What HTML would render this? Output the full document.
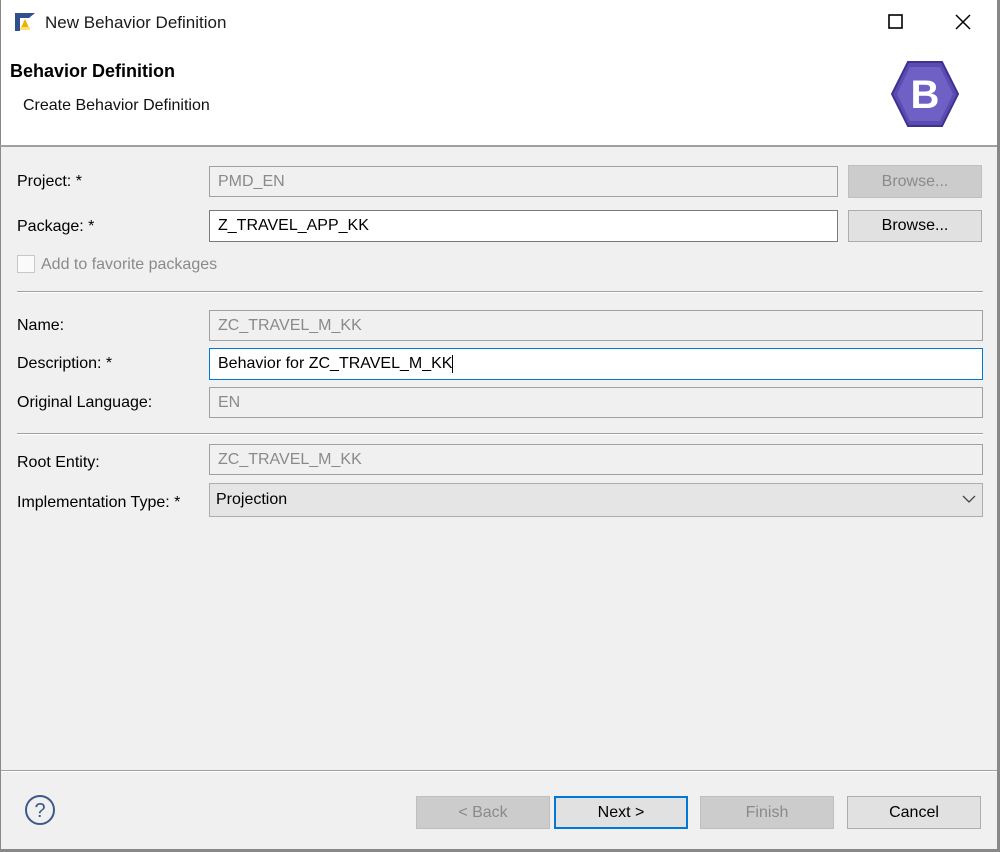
<!DOCTYPE html>
<html><head><meta charset="utf-8"><style>
*{box-sizing:border-box;margin:0;padding:0}
body{width:1000px;height:852px;overflow:hidden;background:#f0f0f0;font-family:"Liberation Sans",sans-serif;font-size:16px;color:#000;position:relative}
.a{position:absolute;white-space:nowrap}
.inp{position:absolute;border:1px solid #7a7a7a;background:#fff;padding-left:8px;display:flex;align-items:center}
.dis{background:#f0f0f0;border-color:#a0a0a0;color:#8a8a8a}
.btn{position:absolute;border:1px solid #adadad;background:#e1e1e1;display:flex;align-items:center;justify-content:center;height:33px;width:134px}
.bd{background:#cccccc;border-color:#bfbfbf;color:#8a8a8a}
.sep{position:absolute;height:2px;background:#a0a0a0;border-bottom:1px solid #fff}
.lbl{position:absolute;white-space:nowrap;transform:translateY(-50%)}
</style></head><body>
<div class="a" style="left:0;top:0;width:1000px;height:145px;background:#fff"></div>
<div class="a" style="left:0;top:0;width:1px;height:852px;background:#888"></div>
<div class="a" style="left:997px;top:0;width:3px;height:852px;background:#888"></div>
<svg class="a" style="left:14px;top:12px" width="22" height="20" viewBox="0 0 22 20"><path d="M1 1H21L15 6H6V19H1Z" fill="#2f4f8f"/><path d="M11 7L16 18H6Z" fill="#f0b000"/><rect x="6" y="15" width="10" height="3" fill="#ffe080"/></svg>
<div class="a" style="left:45px;top:13px;font-size:17px;color:#1a1a1a">New Behavior Definition</div>
<svg class="a" style="left:888px;top:14px" width="16" height="16"><rect x="1" y="1" width="13" height="13" fill="none" stroke="#000" stroke-width="1.6"/></svg>
<svg class="a" style="left:955px;top:14px" width="16" height="16"><path d="M1 1L15 15M15 1L1 15" stroke="#000" stroke-width="1.5"/></svg>
<div class="a" style="left:10px;top:61px;font-size:18px;font-weight:bold">Behavior Definition</div>
<div class="a" style="left:23px;top:97px;font-size:16px;color:#111">Create Behavior Definition</div>
<svg class="a" style="left:890px;top:58px" width="70" height="72" viewBox="0 0 70 72"><polygon points="18,4 52,4 68,36 52,68 18,68 2,36" fill="#5a4bb0" stroke="#3e328f" stroke-width="2"/><polygon points="20,9 50,9 63,36 50,63 20,63 7,36" fill="#6e60c4"/><text x="35" y="50" text-anchor="middle" font-family="Liberation Sans" font-weight="bold" font-size="40" fill="#fff">B</text></svg>
<div class="a" style="left:0;top:145px;width:997px;height:2px;background:#a0a0a0"></div>

<div class="lbl" style="left:17px;top:182px">Project: *</div>
<div class="inp dis" style="left:209px;top:166px;width:629px;height:31px">PMD_EN</div>
<div class="btn bd" style="left:848px;top:165px">Browse...</div>
<div class="lbl" style="left:17px;top:227px">Package: *</div>
<div class="inp" style="left:209px;top:210px;width:629px;height:32px">Z_TRAVEL_APP_KK</div>
<div class="btn" style="left:848px;top:210px;height:32px">Browse...</div>
<div class="a" style="left:17px;top:255px;width:18px;height:18px;border:1px solid #c8c8c8;background:#fafafa"></div>
<div class="lbl" style="left:41px;top:265px;color:#8a8a8a">Add to favorite packages</div>
<div class="sep" style="left:17px;top:291px;width:966px"></div>

<div class="lbl" style="left:17px;top:326px">Name:</div>
<div class="inp dis" style="left:209px;top:310px;width:774px;height:31px">ZC_TRAVEL_M_KK</div>
<div class="lbl" style="left:17px;top:364px">Description: *</div>
<div class="inp" style="left:209px;top:348px;width:774px;height:32px;border-color:#0078d7">Behavior for ZC_TRAVEL_M_KK<span style="display:inline-block;width:1px;height:18px;background:#000"></span></div>
<div class="lbl" style="left:17px;top:403px">Original Language:</div>
<div class="inp dis" style="left:209px;top:387px;width:774px;height:31px">EN</div>
<div class="sep" style="left:17px;top:433px;width:966px"></div>

<div class="lbl" style="left:17px;top:463px">Root Entity:</div>
<div class="inp dis" style="left:209px;top:444px;width:774px;height:31px">ZC_TRAVEL_M_KK</div>
<div class="lbl" style="left:17px;top:503px">Implementation Type: *</div>
<div class="inp" style="left:209px;top:483px;width:774px;height:34px;background:#e5e5e5;border-color:#adadad;padding-left:6px;align-items:flex-start;padding-top:7px">Projection</div>
<svg class="a" style="left:962px;top:494px" width="14" height="10"><path d="M1 2L7 8L13 2" fill="none" stroke="#444" stroke-width="1.3"/></svg>

<div class="sep" style="left:1px;top:770px;width:996px"></div>
<svg class="a" style="left:24px;top:794px" width="32" height="32"><circle cx="16" cy="16" r="14" fill="none" stroke="#3a5a8a" stroke-width="2"/><text x="16" y="23" text-anchor="middle" font-family="Liberation Sans" font-size="20" fill="#3a5a8a">?</text></svg>
<div class="btn bd" style="left:416px;top:796px">&lt; Back</div>
<div class="btn" style="left:554px;top:796px;border:2px solid #0078d7">Next &gt;</div>
<div class="btn bd" style="left:700px;top:796px">Finish</div>
<div class="btn" style="left:847px;top:796px">Cancel</div>
<div class="a" style="left:0;top:849px;width:1000px;height:3px;background:#888"></div>
</body></html>
